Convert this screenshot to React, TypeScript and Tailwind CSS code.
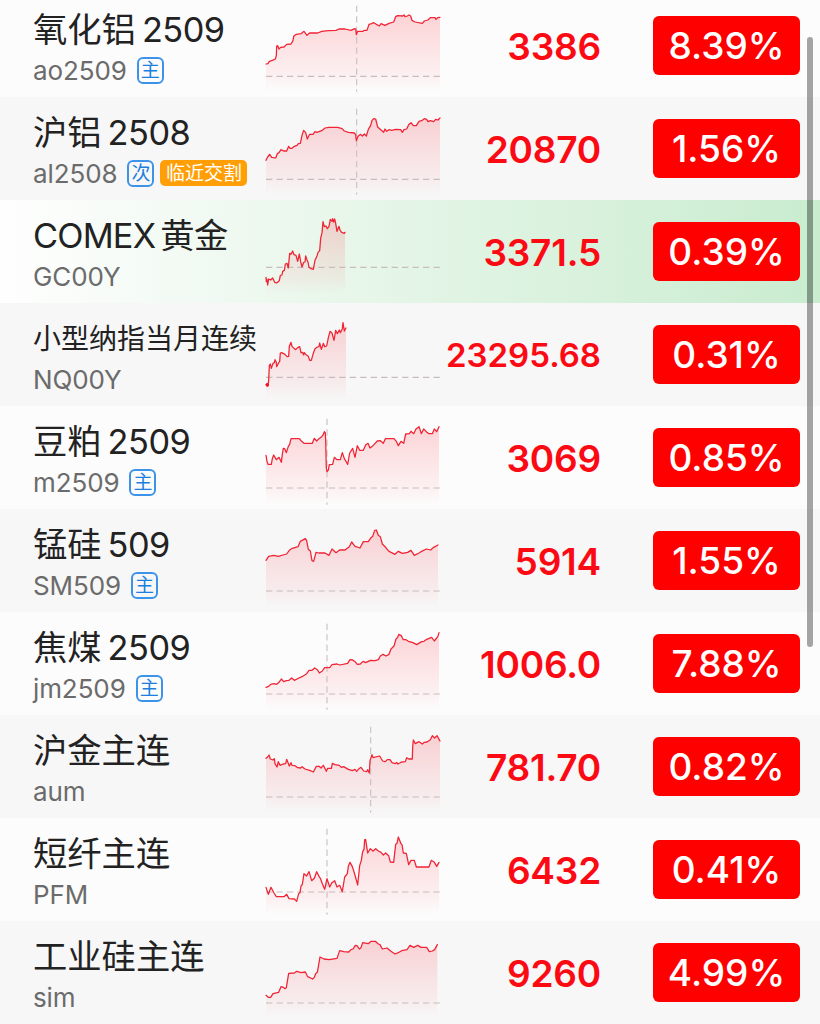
import React from "react"

type Trend = {
  top: number
  base: number
  split?: number
  points: string
}

type Quote = {
  label: string
  num?: string
  code: string
  tag?: string
  notice?: string
  price: string
  pct: string
  trend: Trend
}

// points are in thirds of a pixel, top is the offset inside the row
const quotes: Quote[] = [
  {
    label: "氧化铝",
    num: "2509",
    code: "ao2509",
    tag: "主",
    price: "3386",
    pct: "8.39%",
    trend: {
      top: 18,
      base: 229,
      split: 305,
      points:
        "33,192 39,191 43,184 52,181 61,177 64,167 65,138 68,137 72,147 77,142 87,141 95,133 108,132 114,122 116,109 124,103 138,101 147,94 156,106 164,99 188,99 200,94 220,92 243,91 252,87 270,87 288,91 299,86 302,87 304,104 308,94 324,94 328,91 336,91 342,73 350,71 356,68 364,73 373,78 378,71 390,76 402,70 416,66 422,50 428,47 443,48 447,45 450,50 457,48 462,45 467,48 471,61 480,66 502,70 508,63 519,60 526,53 540,53 543,58 548,53 555,52",
    },
  },
  {
    label: "沪铝",
    num: "2508",
    code: "al2508",
    tag: "次",
    notice: "临近交割",
    price: "20870",
    pct: "1.56%",
    trend: {
      top: 9,
      base: 238,
      split: 305,
      points:
        "33,181 38,171 44,163 50,172 62,174 67,161 72,158 78,149 86,153 95,153 101,139 105,145 111,145 118,139 126,136 130,131 136,130 141,106 146,91 152,98 157,117 164,103 174,103 180,95 186,97 200,92 210,84 222,82 248,82 261,86 268,93 280,97 298,99 302,104 304,122 309,109 317,103 322,108 328,102 334,108 340,88 347,76 351,61 356,56 362,57 368,81 378,90 386,97 390,87 395,94 402,89 410,91 422,88 437,89 442,97 447,89 455,87 461,74 468,68 475,77 484,77 492,64 500,62 508,56 515,58 519,65 526,62 536,65 542,58 549,60 555,54",
    },
  },
  {
    label: "COMEX",
    num: "黄金",
    code: "GC00Y",
    price: "3371.5",
    pct: "0.39%",
    trend: {
      top: 0,
      base: 202,
      points:
        "33,232 34,245 36,238 38,255 41,237 47,240 53,234 59,247 65,249 73,242 76,226 81,225 83,214 88,211 91,192 96,190 100,204 104,160 108,163 113,153 117,164 123,166 128,184 133,162 137,185 141,201 146,187 150,186 152,168 156,180 159,186 162,202 168,206 175,208 180,181 186,168 189,157 194,152 197,115 201,98 204,65 208,80 213,78 217,86 222,79 226,58 231,64 233,56 236,66 239,57 242,70 246,94 252,79 255,90 260,97 268,100 270,97",
    },
  },
  {
    label: "小型纳指当月连续",
    code: "NQ00Y",
    price: "23295.68",
    pct: "0.31%",
    trend: {
      top: 6,
      base: 217,
      points:
        "33,239 36,236 39,242 41,226 43,182 46,177 49,190 54,175 58,173 60,164 64,172 65,185 71,173 74,170 76,144 80,143 90,148 96,155 101,154 103,124 108,112 111,124 117,130 122,134 128,128 134,125 138,143 143,142 146,150 148,143 153,149 160,154 164,166 169,166 174,148 180,131 187,126 192,125 194,114 199,133 205,115 209,125 215,123 220,98 225,79 231,84 237,106 242,76 247,86 253,75 256,83 262,71 264,53 268,78 273,69",
    },
  },
  {
    label: "豆粕",
    num: "2509",
    code: "m2509",
    tag: "主",
    price: "3069",
    pct: "0.85%",
    trend: {
      top: 12,
      base: 234,
      split: 216,
      points:
        "33,136 36,154 39,163 49,163 52,146 56,135 64,149 72,142 79,157 82,133 85,115 89,116 94,128 100,109 104,103 108,86 133,86 139,93 147,100 172,100 178,85 185,93 192,86 200,80 204,75 208,65 211,69 212,91 214,174 216,185 220,180 223,164 233,163 238,142 246,149 256,149 262,128 268,146 274,156 278,163 284,129 293,115 300,142 307,107 314,121 325,121 332,105 339,100 345,114 354,107 367,93 376,92 385,100 391,86 417,86 424,94 430,107 438,94 446,100 452,72 463,71 468,64 476,71 483,57 492,50 499,71 506,57 514,65 522,71 532,71 538,57 545,65 552,50",
    },
  },
  {
    label: "锰硅",
    num: "509",
    code: "SM509",
    tag: "主",
    price: "5914",
    pct: "1.55%",
    trend: {
      top: 9,
      base: 237,
      points:
        "33,145 41,133 56,130 70,133 84,129 95,126 103,115 112,109 129,104 136,88 151,80 155,86 160,112 166,117 171,146 176,148 183,121 192,123 210,123 222,130 231,111 243,122 254,114 270,114 283,104 290,90 300,103 315,108 325,89 340,89 348,77 353,73 359,55 364,54 370,70 376,74 382,96 388,102 402,118 420,127 430,118 442,124 458,121 468,115 478,130 492,123 500,118 514,111 527,114 536,106 549,99",
    },
  },
  {
    label: "焦煤",
    num: "2509",
    code: "jm2509",
    tag: "主",
    price: "1006.0",
    pct: "7.88%",
    trend: {
      top: 9,
      base: 237,
      split: 216,
      points:
        "33,217 41,214 47,208 57,206 65,208 72,202 79,192 86,200 94,197 102,196 110,189 118,196 132,189 141,185 155,176 162,166 171,166 179,159 187,164 193,174 202,168 209,158 224,158 231,149 246,147 255,150 278,145 285,134 293,135 300,140 307,148 316,147 324,139 332,143 346,136 360,137 370,134 376,123 384,118 393,123 402,118 408,102 417,93 423,72 428,67 431,58 439,62 445,74 453,74 460,79 474,83 485,89 500,80 507,79 515,73 530,67 538,78 545,69 549,63 552,53",
    },
  },
  {
    label: "沪金主连",
    code: "aum",
    price: "781.70",
    pct: "0.82%",
    trend: {
      top: 9,
      base: 237,
      split: 347,
      points:
        "33,121 38,117 42,111 46,123 54,126 58,122 60,137 66,147 70,131 75,142 84,138 92,137 95,124 103,144 108,134 111,142 120,143 128,149 137,150 141,146 150,153 164,157 175,162 184,145 192,145 198,150 205,142 214,160 218,151 229,151 232,136 240,140 253,142 259,148 266,146 280,154 292,158 300,154 305,160 312,152 318,148 326,159 335,161 338,155 343,165 345,128 351,110 354,119 374,114 383,129 391,131 397,125 405,125 411,134 421,137 425,133 429,138 440,132 451,131 455,119 461,123 472,123 473,87 475,66 481,77 492,71 502,78 508,73 516,72 526,65 532,53 539,60 546,53 555,69",
    },
  },
  {
    label: "短纤主连",
    code: "PFM",
    price: "6432",
    pct: "0.41%",
    trend: {
      top: 6,
      base: 216,
      split: 216,
      points:
        "33,202 40,223 48,202 57,219 64,230 87,230 95,223 102,236 118,237 125,244 131,221 135,218 138,198 142,193 147,161 155,168 162,155 170,182 178,175 185,155 192,169 196,175 202,191 209,208 216,176 224,201 231,188 239,182 246,201 254,196 262,215 269,171 277,161 280,139 285,127 292,140 299,162 308,195 314,137 319,121 323,95 327,88 329,59 332,59 338,99 346,86 354,93 362,86 370,93 378,97 385,105 392,99 401,107 406,126 416,127 422,73 426,70 430,51 438,71 441,74 445,99 454,100 461,134 468,121 478,121 484,141 522,141 529,121 538,127 545,139 552,127",
    },
  },
  {
    label: "工业硅主连",
    code: "sim",
    price: "9260",
    pct: "4.99%",
    trend: {
      top: 3,
      base: 243,
      points:
        "33,220 40,226 47,226 54,215 71,211 78,194 85,196 90,200 94,197 101,154 118,153 125,148 138,152 151,150 158,164 173,171 178,166 182,155 187,151 195,105 207,111 222,113 246,109 254,86 266,89 281,90 288,83 294,81 301,70 306,71 313,81 318,77 323,62 340,65 348,58 361,58 370,66 375,68 382,81 396,78 408,88 420,96 432,91 440,86 456,83 465,70 476,76 488,70 498,76 515,76 523,89 532,87 539,83 547,68",
    },
  },
]

function Sparkline({ trend, id }: { trend: Trend; id: string }) {
  const pts = trend.points.split(" ")
  const lastX = pts[pts.length - 1].split(",")[0]
  const bottom = trend.top === 18 ? 275 : 284
  return (
    <svg viewBox="0 0 561 309" className="h-[103px] w-[187px] shrink-0" fill="none">
      <defs>
        <linearGradient id={id} x1="0" y1="40" x2="0" y2={bottom} gradientUnits="userSpaceOnUse">
          <stop offset="0" stopColor="#ff1a2a" stopOpacity="0.19" />
          <stop offset="0.8" stopColor="#ff3a48" stopOpacity="0.06" />
          <stop offset="1" stopColor="#ff3a48" stopOpacity="0" />
        </linearGradient>
      </defs>
      <g transform={`translate(0 ${trend.top})`}>
        <path d={`M33,${bottom} L${pts.join(" L")} L${lastX},${bottom} Z`} fill={`url(#${id})`} />
        <path d={`M33,${trend.base} H556`} stroke="#c8bcbe" strokeWidth="3.4" strokeDasharray="19 12.4" />
        {trend.split && (
          <path d={`M${trend.split},${bottom - 258} V${bottom}`} stroke="#c8c0c2" strokeWidth="3.4" strokeDasharray="19 12.4" />
        )}
        <polyline points={trend.points} stroke="#f02434" strokeWidth="3.8" strokeLinejoin="round" strokeLinecap="round" />
        {/* opening marker */}
        {id === "fill-NQ00Y" && <circle cx="37" cy="240" r="5" fill="#f5101f" />}
      </g>
    </svg>
  )
}

function Row({ quote, index }: { quote: Quote; index: number }) {
  const small = quote.label.length > 6
  const active = quote.code === "GC00Y"
  const bg = active
    ? "bg-linear-to-r from-[#fefefe] to-[#c9eccf]"
    : index % 2 === 0
      ? "bg-[#fcfcfc]"
      : "bg-[#f7f7f7]"
  return (
    <div className={`flex h-[103px] shrink-0 ${bg}`}>
      <div className="flex w-[255px] shrink-0 flex-col pl-[33px] pt-[13px]">
        <div
          className={`flex h-[46px] items-center whitespace-nowrap text-[#222222] ${
            small ? "text-[28px]" : "text-[34.3px]"
          } ${active ? "gap-[5px]" : "gap-[6px]"}`}
        >
          <span className={active ? "tracking-[-0.8px]" : ""}>{quote.label}</span>
          {quote.num && <span className={active ? "tracking-[-0.6px]" : "tracking-[-0.5px]"}>{quote.num}</span>}
        </div>
        <div className="-mt-px flex h-[36px] items-center whitespace-nowrap text-[26px] text-[#6b6b6b]">
          <span className="tracking-[-0.1px]">{quote.code}</span>
          {quote.tag && (
            <span className="ml-[10px] flex h-[27px] w-[27px] items-center justify-center rounded-[6px] border-2 border-[#3d93ea] text-[19px] leading-none text-[#1c7fe0]">
              {quote.tag}
            </span>
          )}
          {quote.notice && (
            <span className="ml-[6px] flex h-[26px] w-[87px] items-center justify-center rounded-[5px] bg-[#ff9f05] text-[19px] leading-none text-white">
              {quote.notice}
            </span>
          )}
        </div>
      </div>
      <Sparkline trend={quote.trend} id={`fill-${quote.code}`} />
      <div
        className={`flex w-[159px] shrink-0 items-center justify-end pt-[2px] font-semibold text-[#fb0a14] ${
          quote.price.length > 7 ? "text-[33px]" : "text-[37px] tracking-[-0.2px]"
        }`}
      >
        {quote.price}
      </div>
      <div className="ml-[52px] mt-[22px] flex h-[59px] w-[147px] shrink-0 items-center justify-center rounded-[6px] bg-[#ff0000] pt-px text-[37px] font-medium text-white">
        {quote.pct}
      </div>
    </div>
  )
}

export default function App() {
  return (
    <div className="relative h-[1024px] w-[820px] overflow-hidden bg-[#f7f7f7] font-['Inter','Noto_Sans_CJK_SC',sans-serif]">
      <div className="-mt-[6px] flex flex-col">
        {quotes.map((q, i) => (
          <Row key={q.code} quote={q} index={i} />
        ))}
      </div>
      {/* scrollbar */}
      <div className="absolute left-[807px] top-[37px] h-[610px] w-[6px] rounded-full bg-black/35" />
    </div>
  )
}
